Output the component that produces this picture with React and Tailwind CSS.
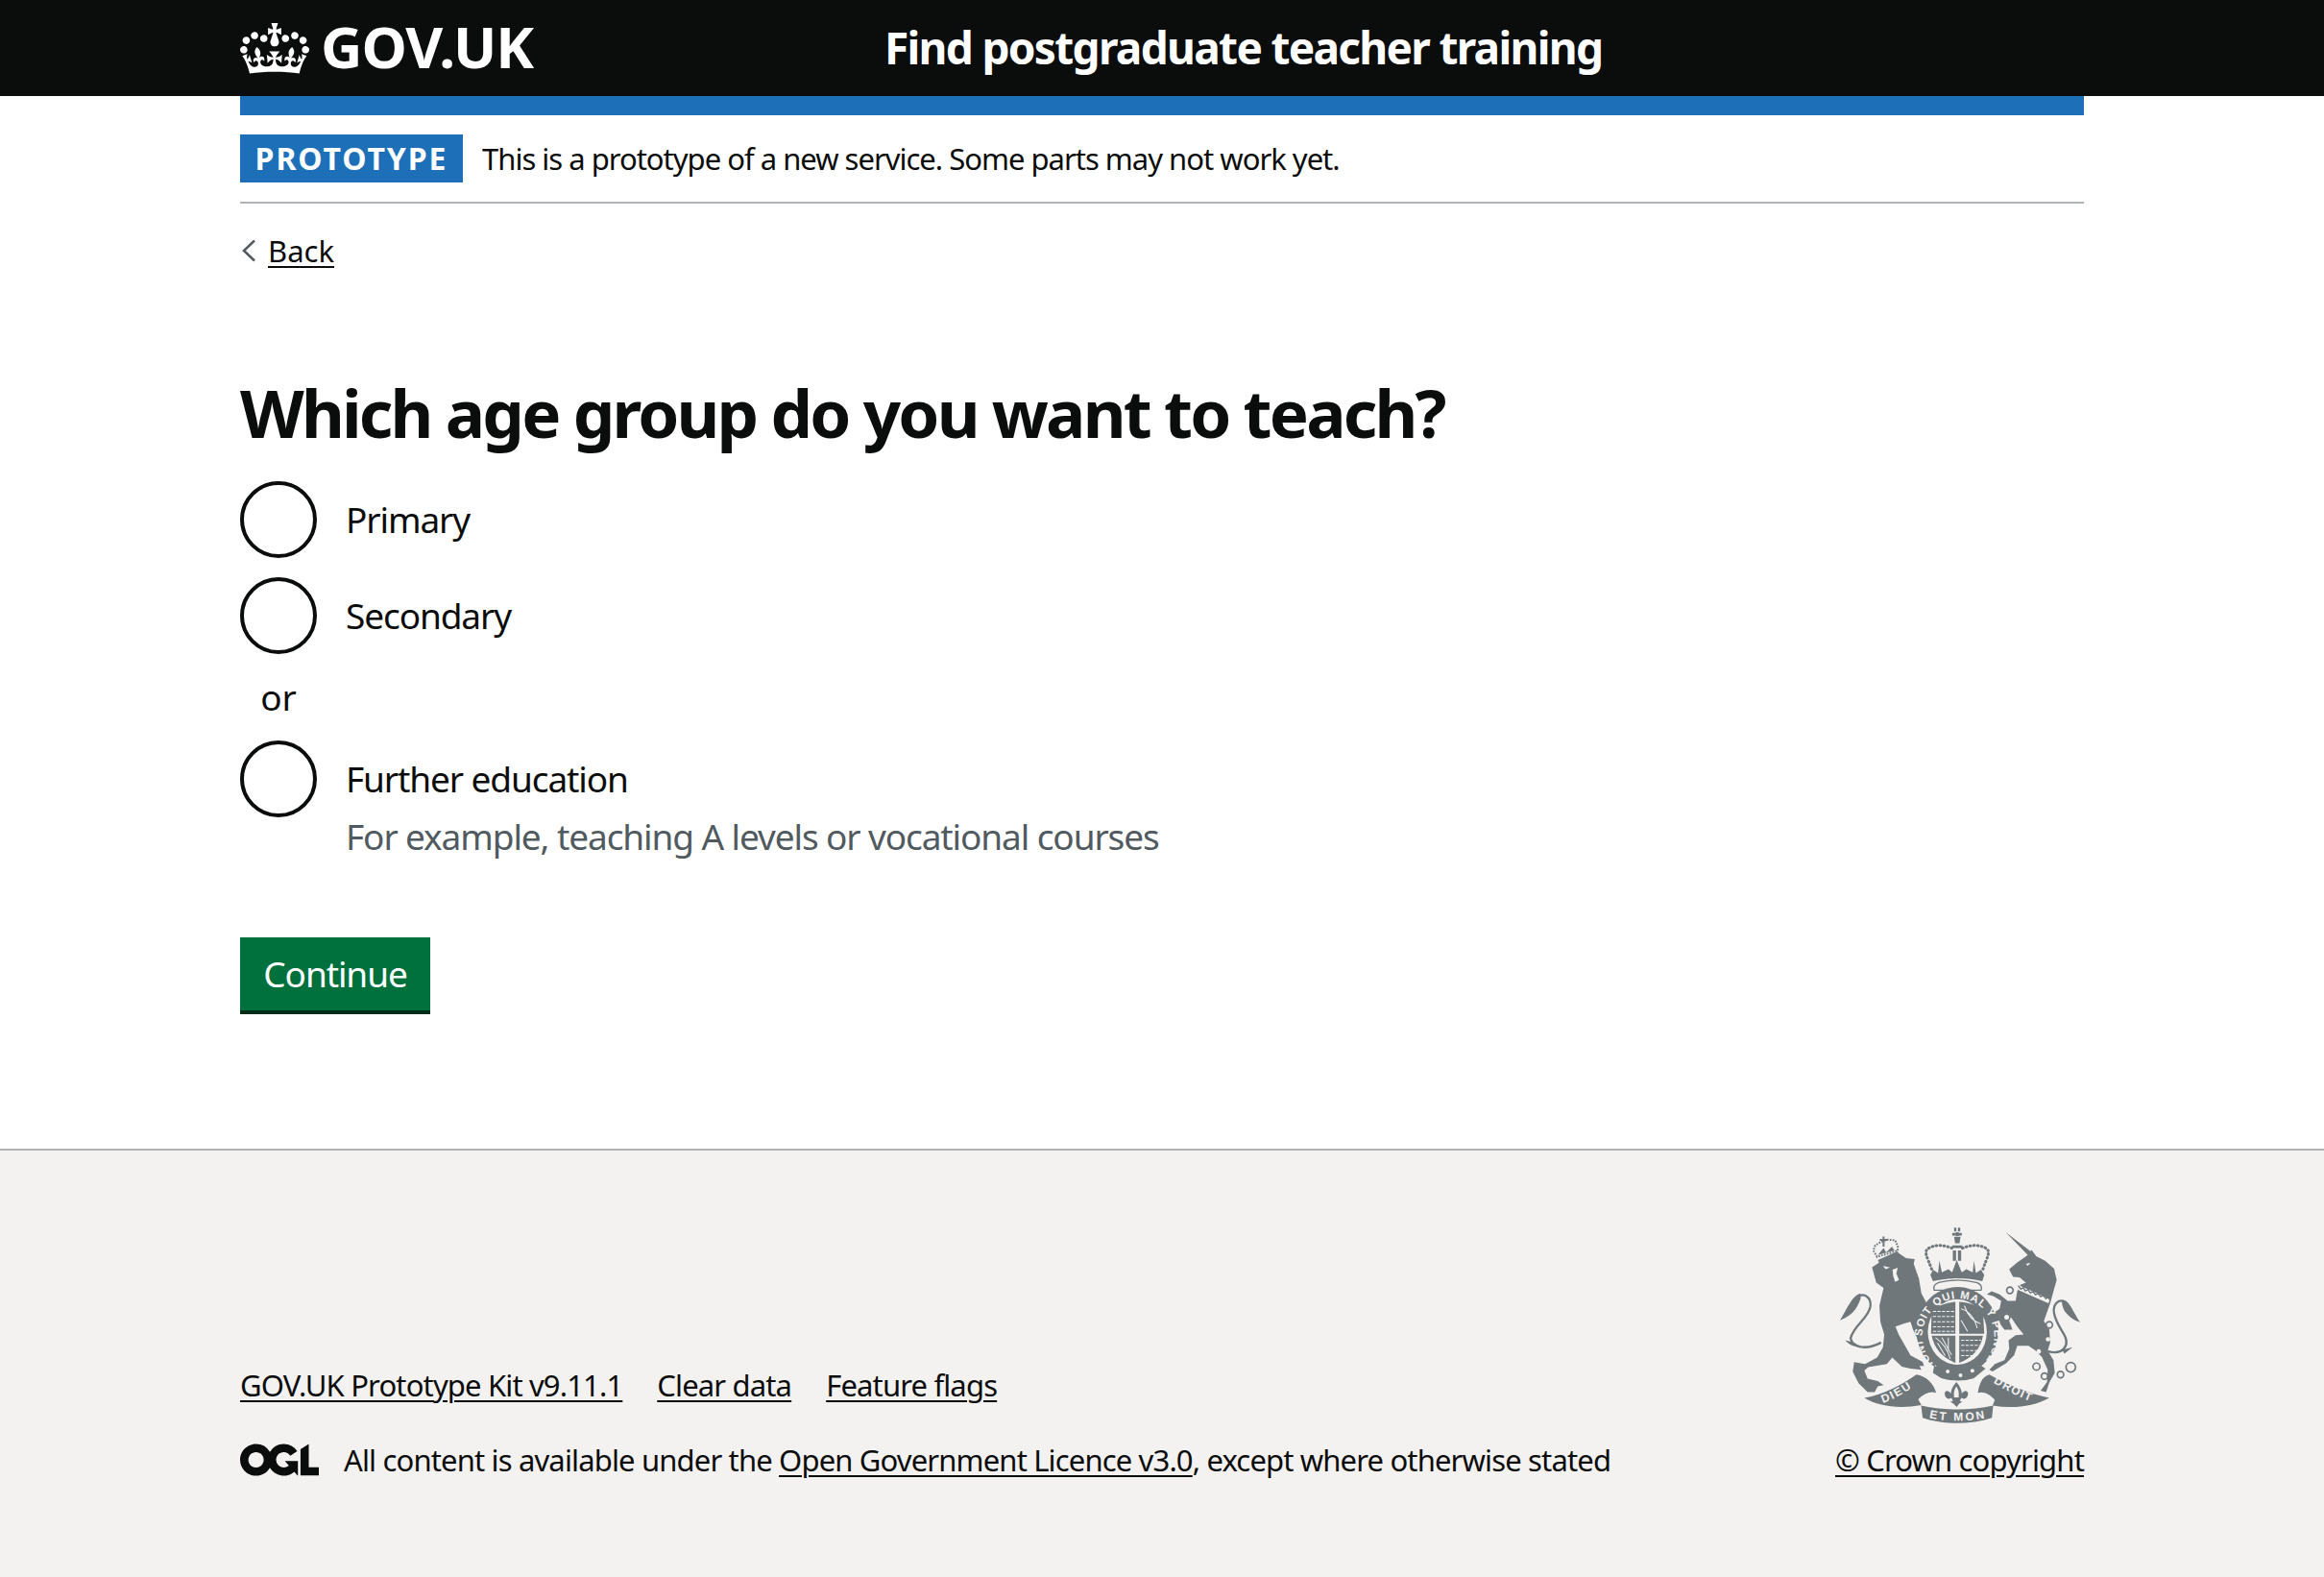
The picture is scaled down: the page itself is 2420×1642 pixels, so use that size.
import React from 'react';

const font = "font-['Noto_Sans','Liberation_Sans',sans-serif]";
const link = 'underline decoration-2 underline-offset-[4px]';

const Crown = () => (
  <svg xmlns="http://www.w3.org/2000/svg" viewBox="0 0 132 97" className="w-[72px] h-[53px] shrink-0">
    <path
      fill="currentColor"
      fillRule="evenodd"
      d="M25 30.2c3.5 1.5 7.7-.2 9.1-3.7 1.5-3.6-.2-7.8-3.9-9.2-3.6-1.4-7.6.3-9.1 3.9-1.4 3.5.3 7.5 3.9 9zM9 39.5c3.6 1.5 7.8-.2 9.2-3.7 1.5-3.6-.2-7.8-3.9-9.1-3.6-1.5-7.6.2-9.1 3.8-1.4 3.5.3 7.5 3.8 9zM4.4 57.2c3.5 1.5 7.7-.2 9.1-3.8 1.5-3.6-.2-7.7-3.9-9.1-3.5-1.5-7.6.3-9.1 3.8-1.4 3.5.3 7.6 3.9 9.1zm38.3-21.4c3.5 1.5 7.7-.2 9.1-3.8 1.5-3.6-.2-7.7-3.9-9.1-3.6-1.5-7.6.3-9.1 3.8-1.3 3.6.4 7.7 3.9 9.1zm64.4-5.6c-3.6 1.5-7.8-.2-9.1-3.7-1.5-3.6.2-7.8 3.8-9.2 3.6-1.4 7.7.3 9.2 3.9 1.3 3.5-.4 7.5-3.9 9zm15.9 9.3c-3.6 1.5-7.7-.2-9.1-3.7-1.5-3.6.2-7.8 3.7-9.1 3.6-1.5 7.7.2 9.2 3.8 1.5 3.5-.3 7.5-3.8 9zm4.7 17.7c-3.6 1.5-7.8-.2-9.2-3.8-1.5-3.6.2-7.7 3.9-9.1 3.6-1.5 7.7.3 9.2 3.8 1.3 3.5-.4 7.6-3.9 9.1zM89.3 35.8c-3.6 1.5-7.8-.2-9.2-3.8-1.4-3.6.2-7.7 3.9-9.1 3.6-1.5 7.7.3 9.2 3.8 1.4 3.6-.3 7.7-3.9 9.1zM69.7 17.7l8.9 4.7V9.3l-8.9 2.8c-.2-.3-.5-.6-.9-.9L72.4 0H59.6l3.5 11.2c-.3.3-.6.5-.9.9l-8.8-2.8v13.1l8.8-4.7c.3.3.6.7.9.9l-5 15.4v.1c-.2.8-.4 1.6-.4 2.4 0 4.1 3.1 7.5 7 8.1h.2c.3 0 .7.1 1 .1.4 0 .7 0 1-.1h.2c4-.6 7.1-4.1 7.1-8.1 0-.8-.1-1.7-.4-2.4V34l-5.1-15.4c.4-.2.7-.6 1-.9zM66 92.8c16.9 0 32.8 1.1 47.1 3.2 4-16.9 8.9-26.7 14-33.5l-9.6-3.4c1 4.9 1.1 7.2 0 10.2-1.5-1.4-3-4.3-4.2-8.7L108.6 76c2.8-2 5-3.2 7.5-3.3-4.4 9.4-10 11.9-13.6 11.2-4.3-.8-6.3-4.6-5.6-7.9 1-4.7 5.7-5.9 8-.5 4.3-8.7-3-11.4-7.6-8.8 7.1-7.2 7.9-13.5 2.1-21.1-8 6.1-8.1 12.3-4.5 20.8-4.7-5.4-12.1-2.5-9.5 6.2 3.4-5.2 7.9-2 7.2 3.1-.6 4.3-6.4 7.8-13.5 7.2-10.3-.9-10.9-8-11.2-13.8 2.5-.5 7.1 1.8 11 7.3L80.2 60c-4.1 4.4-8 5.3-12.3 5.4 1.4-4.4 8-11.6 8-11.6H55.5s6.4 7.2 7.9 11.6c-4.2-.1-8-1-12.3-5.4l1.4 16.4c3.9-5.5 8.5-7.7 10.9-7.3-.3 5.8-.9 12.8-11.1 13.8-7.2.6-12.9-2.9-13.5-7.2-.7-5 3.8-8.3 7.1-3.1 2.7-8.7-4.6-11.6-9.4-6.2 3.7-8.5 3.6-14.7-4.6-20.8-5.8 7.6-5 13.9 2.2 21.1-4.7-2.6-11.9.1-7.7 8.8 2.3-5.5 7.1-4.2 8.1.5.7 3.3-1.3 7.1-5.7 7.9-3.5.7-9-1.8-13.5-11.2 2.5.1 4.7 1.3 7.5 3.3l-4.7-15.4c-1.2 4.4-2.7 7.2-4.3 8.7-1.1-3-.9-5.3 0-10.2l-9.5 3.4c5 6.9 9.9 16.7 14 33.5 14.8-2.1 30.8-3.2 47.7-3.2z"
    />
  </svg>
);

const OglLogo = () => (
  <svg xmlns="http://www.w3.org/2000/svg" viewBox="0 0 483.2 195.7" className="w-[82px] h-[34px] shrink-0 text-[#0b0c0c]">
    <path
      fill="currentColor"
      d="M421.5 142.8V.1l-50.7 32.3v161.1h112.4v-50.7zm-122.3-9.6A47.12 47.12 0 0 1 221 97.8c0-26 21.1-47.1 47.1-47.1 16.7 0 31.4 8.7 39.7 21.8l42.7-27.2A97.63 97.63 0 0 0 268.1 0c-36.5 0-68.3 20.1-85.1 49.7A98 98 0 0 0 97.8 0C43.9 0 0 43.9 0 97.8s43.9 97.8 97.8 97.8c36.5 0 68.3-20.1 85.1-49.7a97.76 97.76 0 0 0 149.6 25.4l19.4 22.2h3v-87.8h-80l24.3 27.5zM97.8 145c-26 0-47.1-21.1-47.1-47.1s21.1-47.1 47.1-47.1 47.2 21 47.2 47S123.8 145 97.8 145"
    />
  </svg>
);

const grey = '#6f777b';
const paper = '#f3f2f1';

const Lion = () => (
  <g transform="translate(60 30)">
    <path d="M142 150L165 135 225 106 248 122 275 125 272 140 288 185 296 232 312 262 296 290 305 312 290 320 308 345 312 375 298 390 282 370 270 345 262 320 245 325 215 335 225 360 245 395 262 425 300 445 304 458 290 458 296 470 262 466 235 460 205 432 188 452 130 462 118 472 128 498 160 505 178 518 160 522 150 540 128 540 100 512 82 476 86 446 120 452 158 432 176 400 180 360 168 320 165 270 178 215 155 198z" />
    <path d="M170 385C120 412 80 398 75 372 85 330 130 312 137 272 140 242 112 226 96 246" fill="none" stroke={grey} strokeWidth="7" />
    <path d="M105 232C78 240 62 285 42 316 70 304 86 292 98 268 104 256 110 245 105 232zM58 378C70 392 88 400 105 398L82 384z" />
    <path d="M176 146L198 151 184 156zM206 158L222 152 218 170 226 190 214 196 208 178z" fill={paper} />
    <path d="M160 128L222 100 226 110 165 138z" />
    <path d="M158 118L146 98 152 82 168 72 190 64 214 66 222 84 222 98z" fill="none" stroke={grey} strokeWidth="6" strokeDasharray="5 4" />
    <path d="M175 54h6v8h9v6h-9v18h-6v-18h-9v-6h9z" />
    <path d="M160 112L178 90 186 104 204 86 212 98z" />
  </g>
);

const Unicorn = () => (
  <g transform="translate(450 30)">
    <path d="M168 40L246 100 250 96 264 116 292 130 320 155 328 190 318 225 308 262 288 318 305 345 308 385 300 410 318 440 322 480 305 510 295 540 278 535 298 508 300 470 282 430 262 410 240 395 205 395 195 425 170 450 150 462 128 475 118 470 135 452 165 440 180 405 178 378 200 362 225 360 205 335 188 310 170 290 190 345 165 345 150 325 125 305 135 290 150 280 155 255 130 240 110 235 125 225 150 235 175 255 200 255 205 225 215 205 232 198 212 182 192 180 184 165 180 156 205 135 238 112z" />
    <path d="M210 214L305 256" fill="none" stroke={paper} strokeWidth="14" />
    <path d="M208 208l8 10 8-4 6 10 8-4 8 10 8-4 8 10 8-4 8 10 8-4 8 10 8-4 6 10" fill="none" stroke={grey} strokeWidth="4" />
    <path d="M232 140l14-4-8 10z" fill={paper} />
    <circle cx="301" cy="375" r="7" fill={paper} />
    <circle cx="272" cy="413" r="7" fill={paper} />
    <path d="M300 412C342 425 378 398 345 350 322 312 305 272 335 256 352 250 362 268 368 282" fill="none" stroke={grey} strokeWidth="7" />
    <path d="M345 252C368 250 378 290 402 322 378 316 362 300 352 286 348 276 342 262 345 252zM345 408L378 400 352 420z" />
    {[[182, 222, 10], [172, 306, 10], [305, 330, 10], [265, 460, 11], [290, 490, 10], [340, 485, 10], [372, 462, 15]].map(([cx, cy, r]) => (
      <circle key={`${cx}-${cy}`} cx={cx} cy={cy} r={r} fill={paper} stroke={grey} strokeWidth="5" />
    ))}
  </g>
);

const CrownAndShield = () => (
  <g>
    {/* crown */}
    <path d="M458 57h7v12h-7zM470 57h7v12h-7zM452 73h12v-2h8v2h12v-0h-2v8h-10v2h-8v-2h-12zM458 85h20l-3 20h-14z" />
    <path d="M452 112h32v8h-32zM454 128h10v32h-10zM470 128h10v32h-10z" />
    <path d="M388 186C375 150 360 130 380 120 410 104 440 116 460 124M548 186C560 150 575 130 556 120 525 104 495 116 476 124" fill="none" stroke={grey} strokeWidth="9" strokeDasharray="2 10" strokeLinecap="round" />
    <path d="M384 204L392 188 408 198 412 160 420 196 440 186 452 196 466 158 482 196 496 186 516 196 520 160 526 198 542 188 552 204 546 224C500 212 436 212 392 224z" />
    <path d="M396 252C392 240 398 232 410 228 450 218 490 218 528 228 540 232 546 240 542 252z" fill={paper} stroke={grey} strokeWidth="4" />
    {/* garter */}
    <ellipse cx="468" cy="378" rx="128" ry="136" />
    <ellipse cx="468" cy="382" rx="92" ry="102" fill={paper} />
    <path id="garter-line" d="M404 490A112 118 0 1 1 538 490" fill="none" />
    <text fontFamily="'Liberation Sans', sans-serif" fontWeight="700" fontSize="34" fill={paper}>
      <textPath href="#garter-line" textLength="550" lengthAdjust="spacing">HONI SOIT QUI MAL Y PENSE</textPath>
    </text>
    {/* quarters */}
    <path d="M388 312C410 298 440 290 462 288V388H386z" />
    <path d="M474 288C500 290 528 298 548 312L552 388H474z" />
    <path d="M388 394H462V478C425 466 396 434 388 394z" />
    <path d="M474 394H548C542 434 512 466 474 478z" />
    <g stroke={paper} strokeWidth="3" fill="none">
      <path d="M392 318H460M392 334h68M392 350h68M392 366h68M392 380h68" strokeDasharray="10 4" />
      <path d="M480 310c20 6 40 22 50 60M490 300c10 30 30 50 50 56M500 380l-20-34" />
      <path d="M400 400c20 12 40 40 46 66M420 400l30 54M440 400v40M406 416l24 40" />
      <path d="M480 408H542M480 424h58M480 440h50M480 456h36" strokeDasharray="10 4" />
    </g>
    {/* buckle */}
    <path d="M396 486C420 510 516 510 540 486L556 496 520 526C490 536 450 536 418 526L392 510z" />
    <circle cx="438" cy="505" r="6" fill={paper} />
    <circle cx="478" cy="517" r="6" fill={paper} />
    <circle cx="515" cy="503" r="6" fill={paper} />
    {/* fleur de lis */}
    <path d="M465 538C476 550 482 564 482 574 492 560 506 566 500 582 496 592 486 592 480 588L476 598 484 600 474 606 466 616 456 606 446 600 454 598 450 588C444 592 434 592 430 582 424 566 438 560 448 574 448 564 454 550 465 538z" />
    <path d="M465 552C471 560 474 570 472 586H458C456 570 459 560 465 552z" fill={paper} />
  </g>
);

const Ribbon = () => (
  <g>
    <path d="M178 588C240 576 290 550 340 515 370 518 396 545 402 572 384 566 364 574 346 592L356 610C290 622 225 616 178 588z" />
    <path d="M755 588C700 576 625 548 568 515 542 522 536 550 532 572 550 566 570 576 585 594L578 612C640 622 705 616 755 588z" />
    <path d="M355 612C420 628 510 628 580 612L576 650C510 672 420 672 360 650z" />
    <path id="ribbon-left" d="M236 604C270 592 305 572 342 545" fill="none" />
    <path id="ribbon-right" d="M580 540C620 565 660 585 705 602" fill="none" />
    <path id="ribbon-mid" d="M380 650C430 662 510 662 556 650" fill="none" />
    <g fontFamily="'Liberation Sans', sans-serif" fontWeight="700" fontSize="36" fill={paper}>
      <text><textPath href="#ribbon-left" textLength="100" lengthAdjust="spacing">DIEU</textPath></text>
      <text><textPath href="#ribbon-right" textLength="128" lengthAdjust="spacing">DROIT</textPath></text>
      <text><textPath href="#ribbon-mid" textLength="174" lengthAdjust="spacing">ET MON</textPath></text>
    </g>
  </g>
);

// royal arms, drawn by hand
const Crest = () => (
  <svg xmlns="http://www.w3.org/2000/svg" viewBox="90 50 770 620" className="w-[257px] h-[207px] shrink-0" fill={grey}>
    <Lion />
    <Unicorn />
    <CrownAndShield />
    <Ribbon />
  </svg>
);

const Radio = ({ label, hint }) => (
  <label className="flex items-start mb-[20px]">
    <span className="w-[80px] h-[80px] rounded-full border-4 border-[#0b0c0c] bg-white shrink-0"></span>
    <span className="pl-[30px] pt-[15px]">
      <span className="block text-[37px] leading-[50px] text-[#0b0c0c] tracking-[-1.1px]">{label}</span>
      {hint && <span className="block text-[37px] leading-[50px] text-[#505a5f] mt-[10px] tracking-[-1.1px]">{hint}</span>}
    </span>
  </label>
);

const App = () => {
  return (
    <div className={`min-h-[1642px] bg-white flex flex-col ${font} text-[#0b0c0c]`}>
      {/* Header */}
      <header className="bg-[#0b0c0c] h-[100px] text-white">
        <div className="mx-[250px] flex items-center h-full">
          <div className="w-[671px] flex items-center gap-[12px]">
            <Crown />
            <span className="text-[60px] leading-none font-bold tracking-[-1px] -mt-[4px]">GOV.UK</span>
          </div>
          <span className="text-[46px] leading-none font-bold tracking-[-1.7px] -mt-[2px]">Find postgraduate teacher training</span>
        </div>
      </header>

      <div className="mx-[250px]">
        <div className="h-[20px] bg-[#1d70b8]"></div>

        {/* Phase banner */}
        <div className="flex items-center pt-[20px] pb-[20px] border-b-2 border-[#b1b4b6]">
          <span className="h-[50px] w-[232px] bg-[#1d70b8] text-white text-[32px] font-bold tracking-[1.9px] flex items-center justify-center">PROTOTYPE</span>
          <span className="ml-[20px] text-[31px] leading-[50px] tracking-[-1px]">This is a prototype of a new service. Some parts may not work yet.</span>
        </div>

        {/* Back link */}
        <a href="#" className={`inline-flex items-center mt-[29px] text-[31px] leading-[40px] ${link}`}>
          <svg viewBox="0 0 16 24" className="w-[16px] h-[24px] mr-[13px] shrink-0" fill="none" stroke="#505a5f" strokeWidth="2.5">
            <path d="M15 1.5L4 12l11 10.5" />
          </svg>
          Back
        </a>

        <main className="pt-[108px] pb-[144px]">
          <h1 className="text-[69px] leading-[80px] font-bold tracking-[-2.8px] mb-[32px]">Which age group do you want to teach?</h1>

          <Radio label="Primary" />
          <Radio label="Secondary" />
          <div className="w-[80px] text-center text-[37px] leading-[50px] mb-[20px]">or</div>
          <Radio label="Further education" hint="For example, teaching A levels or vocational courses" />

          <button className="mt-[60px] bg-[#00703c] text-white text-[37px] tracking-[-1.1px] leading-[40px] h-[76px] w-[198px] shadow-[0_4px_0_#002d18]">Continue</button>
        </main>
      </div>

      {/* Footer */}
      <footer className="bg-[#f3f2f1] border-t-2 border-[#b1b4b6] flex-1 text-[31px] tracking-[-0.85px]">
        <div className="mx-[250px] pt-[78px] flex items-end justify-between">
          <div>
            <div className="flex gap-[36px] mb-[32px]">
              <a href="#" className={link}>GOV.UK Prototype Kit v9.11.1</a>
              <a href="#" className={link}>Clear data</a>
              <a href="#" className={link}>Feature flags</a>
            </div>
            <div className="flex items-center">
              <OglLogo />
              <span className="ml-[26px]">
                All content is available under the{' '}
                <a href="#" className={link}>Open Government Licence v3.0</a>, except where otherwise stated
              </span>
            </div>
          </div>
          <div className="flex flex-col items-center">
            <Crest />
            <a href="#" className={`mt-[14px] ${link}`}>© Crown copyright</a>
          </div>
        </div>
      </footer>
    </div>
  );
};

export default App;
